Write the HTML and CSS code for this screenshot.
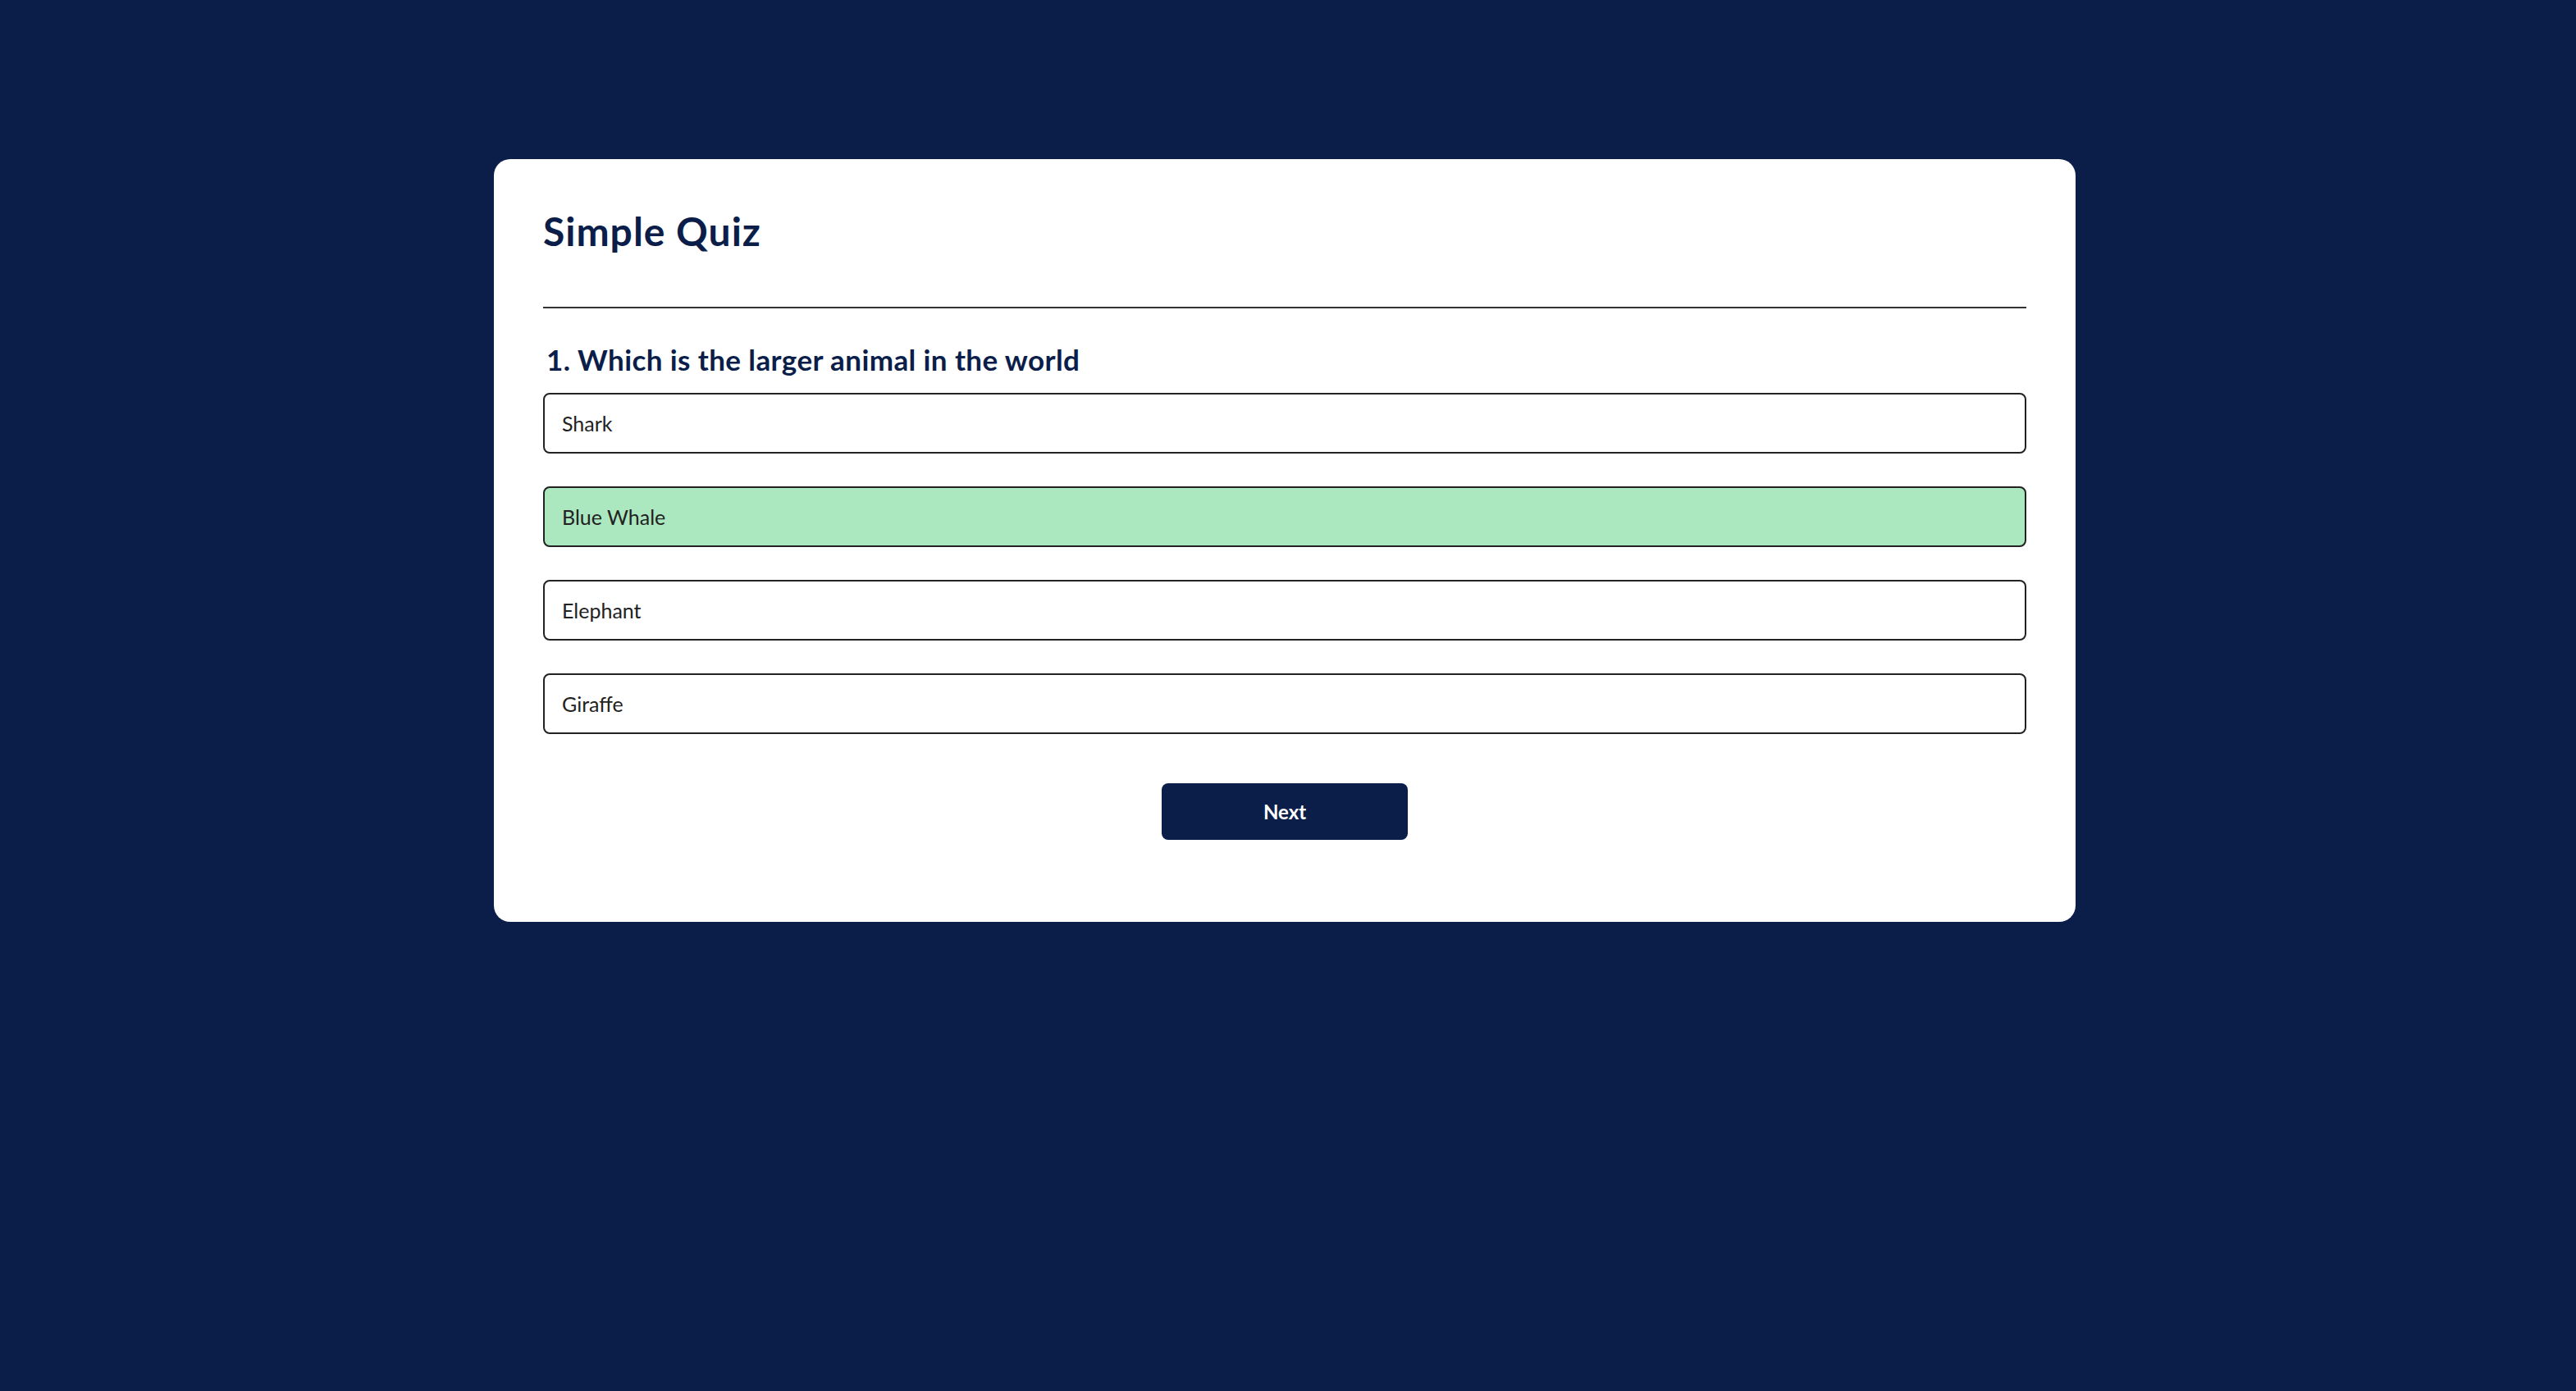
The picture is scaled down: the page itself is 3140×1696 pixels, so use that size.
FILE: index.html
```html
<!DOCTYPE html>
<html lang="en">
<head>
<meta charset="utf-8">
<title>Simple Quiz</title>
<link rel="stylesheet" href="styles.css">
</head>
<body>
<div class="page">
  <div class="app">
    <h1 class="title">Simple Quiz</h1>
    <hr class="rule">
    <div class="quiz">
      <h2 class="question">1. Which is the larger animal in the world</h2>
      <div class="answers">
        <button class="answer">Shark</button>
        <button class="answer correct">Blue Whale</button>
        <button class="answer">Elephant</button>
        <button class="answer">Giraffe</button>
      </div>
      <button class="next">Next</button>
    </div>
  </div>
</div>
</body>
</html>
```

FILE: styles.css
```css
* {
  box-sizing: border-box;
}

html, body {
  margin: 0;
  padding: 0;
  background: #0a1e49;
  min-height: 100%;
}

body {
  font-family: "Lato", "Open Sans", sans-serif;
}

.page {
  display: flex;
  justify-content: center;
  padding: 194px 8px 0 0;
  min-height: 1696px;
}

.app {
  width: 1928px;
  background: #ffffff;
  border-radius: 20px;
  padding: 60px 60px 100px;
  align-self: flex-start;
}

.title {
  margin: 0;
  font-size: 48px;
  line-height: 56px;
  font-weight: 700;
  letter-spacing: 1px;
  color: #0a1e49;
}

.rule {
  margin: 64px 0 0;
  border: none;
  height: 2px;
  background: #333333;
}

.quiz {
  display: flex;
  flex-direction: column;
}

.question {
  margin: 40px 0 0 4px;
  font-size: 35px;
  line-height: 44px;
  font-weight: 700;
  letter-spacing: 0.4px;
  color: #0a1e49;
}

.answers {
  display: flex;
  flex-direction: column;
  gap: 40px;
  margin-top: 19px;
}

.answer {
  display: block;
  width: 100%;
  height: 74px;
  padding: 0 21px;
  text-align: left;
  font-family: "Lato", "Open Sans", sans-serif;
  font-size: 25px;
  line-height: 70px;
  color: #222222;
  background: #ffffff;
  border: 2px solid #222222;
  border-radius: 8px;
}

.answer.correct {
  background: #abe8bf;
}

.next {
  align-self: center;
  margin-top: 60px;
  width: 300px;
  height: 69px;
  border: none;
  border-radius: 8px;
  background: #0a1e49;
  color: #ffffff;
  font-family: "Lato", "Open Sans", sans-serif;
  font-size: 24px;
  font-weight: 700;
}
```
